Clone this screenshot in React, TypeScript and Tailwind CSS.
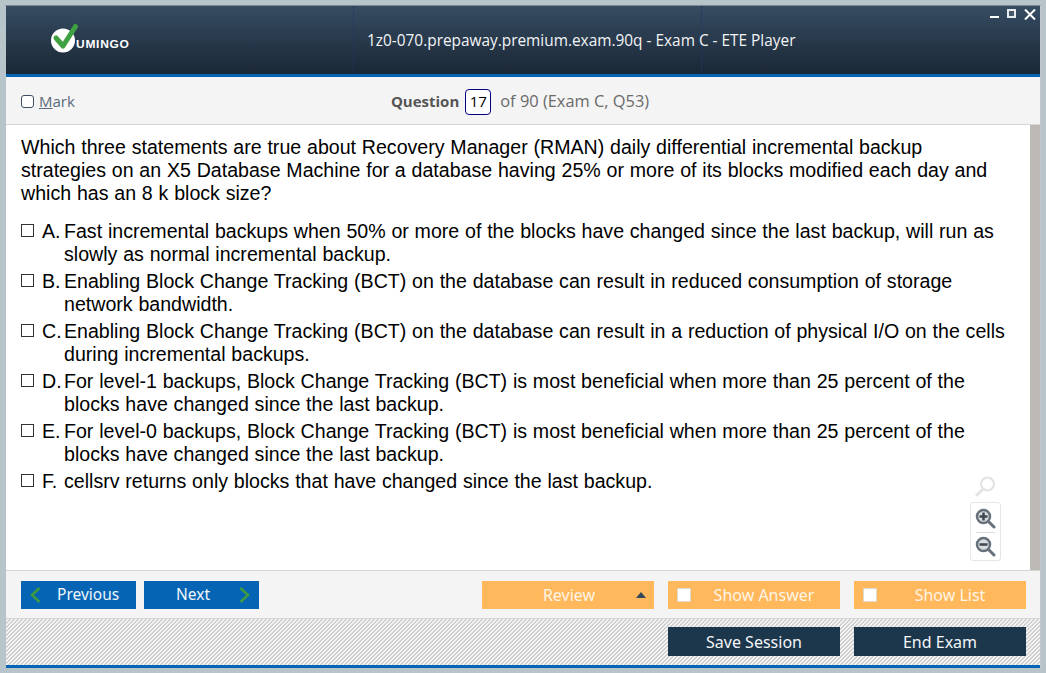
import { ReactNode } from 'react';

const options = [
  {
    label: 'A.',
    text: 'Fast incremental backups when 50% or more of the blocks have changed since the last backup, will run as slowly as normal incremental backup.',
  },
  {
    label: 'B.',
    text: 'Enabling Block Change Tracking (BCT) on the database can result in reduced consumption of storage network bandwidth.',
  },
  {
    label: 'C.',
    text: 'Enabling Block Change Tracking (BCT) on the database can result in a reduction of physical I/O on the cells during incremental backups.',
  },
  {
    label: 'D.',
    text: 'For level-1 backups, Block Change Tracking (BCT) is most beneficial when more than 25 percent of the blocks have changed since the last backup.',
  },
  {
    label: 'E.',
    text: 'For level-0 backups, Block Change Tracking (BCT) is most beneficial when more than 25 percent of the blocks have changed since the last backup.',
  },
  {
    label: 'F.',
    text: 'cellsrv returns only blocks that have changed since the last backup.',
  },
];

function Logo() {
  return (
    <div className="flex items-end">
      <svg width="32" height="30" viewBox="0 0 32 30" className="shrink-0">
        <circle cx="13" cy="17.500" r="12" fill="#ffffff" />
        <path d="M6 15 L13 23 L25.500 3.500" fill="none" stroke="#3fa142" strokeWidth="5" strokeLinecap="round" strokeLinejoin="round" />
      </svg>
      <span className="-ml-[6px] mb-[3px] origin-left font-['Liberation_Sans',sans-serif] text-[10px] leading-[11px] font-bold tracking-[0.6px] text-white [transform:scaleX(1.2)]">
        UMINGO
      </span>
    </div>
  );
}

function WindowControls() {
  return (
    <div className="flex h-[16px] items-start gap-[8px] pt-[3px] pr-[4px]">
      <div className="mt-[7px] h-[2px] w-[9px] bg-white" />
      <div className="h-[9px] w-[9px] border-2 border-[#e8ecef] bg-[#47586a]" />
      <svg width="12" height="11" viewBox="0 0 12 11">
        <path d="M1 0.500 L11 10.500 M11 0.500 L1 10.500" stroke="#ffffff" strokeWidth="2" />
      </svg>
    </div>
  );
}

function Header() {
  return (
    <header className="flex h-[68px] bg-gradient-to-b from-[#364d62] to-[#1a2736] font-['Open_Sans',sans-serif] text-white">
      <div className="flex w-[348px] shrink-0 items-start border-r border-dotted border-[#24346a] pt-[17px] pl-[44px]">
        <Logo />
      </div>
      <div className="flex w-[348px] shrink-0 items-center border-r border-dotted border-[#24346a] pt-[2px] pl-[13px] whitespace-nowrap">
        <span className="text-[15.400px] text-[#f2f4f6]">1z0-070.prepaway.premium.exam.90q - Exam C - ETE Player</span>
      </div>
      <div className="flex flex-1 justify-end">
        <WindowControls />
      </div>
    </header>
  );
}

function MarkBar() {
  return (
    <div className="grid h-[48px] grid-cols-[1fr_auto_1fr] items-center border-b border-[#d6d6d6] bg-[#f4f4f4] pt-[2px] pr-[8px] pl-[15px] font-['Open_Sans',sans-serif]">
      <div className="flex items-center gap-[5px] text-[15px] text-[#5a6b7d]">
        <div className="h-[13px] w-[13px] rounded-[3px] border border-[#3c4f63] bg-white" />
        <span>
          <span className="underline">M</span>ark
        </span>
      </div>
      <div className="mr-[13px] flex items-center text-[16.400px] text-[#6a6a6a]">
        <span className="text-[15px] font-bold text-[#555555]">Question</span>
        <span className="mr-[9px] ml-[6px] flex h-[26px] w-[26px] items-center justify-center rounded-[4px] border border-[#000080] bg-white text-[15px] text-black">
          17
        </span>
        <span>of 90 (Exam C, Q53)</span>
      </div>
      <div />
    </div>
  );
}

function Magnifier({ sign, light }: { sign?: 'plus' | 'minus'; light?: boolean }) {
  const color = light ? '#e3e3e3' : '#66717c';
  return (
    <svg width="21" height="21" viewBox="0 0 21 21" fill="none">
      {light ? (
        <>
          <circle cx="12.500" cy="8" r="6.500" stroke={color} strokeWidth="2.200" />
          <path d="M8 13 L2 19" stroke={color} strokeWidth="3" strokeLinecap="round" />
        </>
      ) : (
        <>
          <circle cx="8.500" cy="8.500" r="6.500" stroke={color} strokeWidth="2.500" fill="#d9dde0" />
          <path d="M13.500 13.500 L19 19" stroke={color} strokeWidth="3" strokeLinecap="round" />
          <path d="M4.500 8.500 H12.500" stroke="#3e4650" strokeWidth="2.500" />
          {sign === 'plus' && <path d="M8.500 4.500 V12.500" stroke="#3e4650" strokeWidth="2.500" />}
        </>
      )}
    </svg>
  );
}

function ZoomControls() {
  return (
    <div className="absolute right-[29px] bottom-[9px] flex flex-col items-center">
      <Magnifier light />
      <div className="mt-[5px] flex h-[59px] w-[31px] flex-col items-center rounded-[3px] border border-[#e6e6e6] bg-white pt-[5px]">
        <Magnifier sign="plus" />
        <div className="my-[3px] h-px w-[19px] bg-[#dddddd]" />
        <Magnifier sign="minus" />
      </div>
    </div>
  );
}

function Content() {
  return (
    <div className="flex h-[445px]">
      <main className="relative flex-1 bg-white pt-[11px] pr-[24px] pl-[15px] font-['Liberation_Sans',sans-serif] text-[19.600px] leading-[23px] [word-spacing:0.35px] text-black">
        <p>
          Which three statements are true about Recovery Manager (RMAN) daily differential incremental backup strategies on an X5 Database Machine for a database having 25% or more of its blocks modified each day and which has an 8 k block size?
        </p>
        <div className="mt-[15px] flex flex-col gap-[4px]">
          {options.map((option) => (
            <div key={option.label} className="flex">
              <div className="mt-[4px] mr-[8px] h-[13px] w-[13px] shrink-0 border border-[#333333] bg-white" />
              <span className="w-[22px] shrink-0">{option.label}</span>
              <span>{option.text}</span>
            </div>
          ))}
        </div>
        <ZoomControls />
      </main>
      <div className="w-[10px] bg-[#bdb9b5]" />
    </div>
  );
}

function NavButton({ children, dir }: { children: ReactNode; dir: 'left' | 'right' }) {
  const arrow = (
    <svg width="11" height="16" viewBox="0 0 11 16" fill="none" className="shrink-0">
      <path d={dir === 'left' ? 'M9.500 1 L2 8 L9.500 15' : 'M1.500 1 L9 8 L1.500 15'} stroke="#3f9b3f" strokeWidth="2.500" />
    </svg>
  );
  return (
    <button type="button" className="flex h-[28px] w-[115px] items-center bg-[#0565b4] px-[9px] text-[15.500px] text-[#f1f6fb]">
      {dir === 'left' && arrow}
      <span className={dir === 'left' ? 'mt-[1px] ml-[16px]' : 'mt-[1px] ml-[23px]'}>{children}</span>
      {dir === 'right' && <span className="ml-auto">{arrow}</span>}
    </button>
  );
}

function OrangeButton({ children, check }: { children: ReactNode; check?: boolean }) {
  return (
    <button type="button" className="flex h-[28px] w-[172px] items-center bg-[#ffb85c] pr-[8px] pl-[9px] text-[16px] text-[#fff5e6]">
      {check ? (
        <div className="h-[14px] w-[14px] shrink-0 border border-[#e0d8cc] bg-white" />
      ) : (
        <div className="h-[14px] w-[14px] shrink-0" />
      )}
      <span className={check ? 'ml-[15px] flex-1 text-center' : '-ml-[3px] flex-1 text-center'}>{children}</span>
      {!check && (
        <svg width="10" height="6" viewBox="0 0 10 6" className="shrink-0">
          <path d="M5 0 L10 6 H0 Z" fill="#33475b" />
        </svg>
      )}
      {check && <span className="w-[10px] shrink-0" />}
    </button>
  );
}

function Footer() {
  return (
    <footer className="font-['Noto_Sans',sans-serif]">
      <div className="flex h-[49px] items-center justify-between border-t border-b border-[#d6d6d6] bg-[#f4f4f4] pr-[14px] pl-[15px]">
        <div className="flex gap-[8px]">
          <NavButton dir="left">Previous</NavButton>
          <NavButton dir="right">Next</NavButton>
        </div>
        <div className="flex gap-[14px]">
          <OrangeButton>Review</OrangeButton>
          <OrangeButton check>Show Answer</OrangeButton>
          <OrangeButton check>Show List</OrangeButton>
        </div>
      </div>
      <div className="flex h-[46px] items-start justify-end gap-[14px] bg-[#f1f1f1] bg-[repeating-linear-gradient(135deg,#d0d0d0_0px,#d0d0d0_1px,#f4f4f4_1px,#f4f4f4_2.828px)] pt-[8px] pr-[14px]">
        <button type="button" className="h-[29px] w-[172px] bg-[#1c364c] text-[16px] text-[#f4f7fa]">
          Save Session
        </button>
        <button type="button" className="h-[29px] w-[172px] bg-[#1c364c] text-[16px] text-[#f4f7fa]">
          End Exam
        </button>
      </div>
      <div className="h-[3px] bg-[#0565b4]" />
    </footer>
  );
}

export default function App() {
  return (
    <div className="h-[673px] w-[1046px] overflow-hidden bg-[#b7c4ca] pt-[5px] pr-[5px] pl-[5px]">
      <div className="border-t border-r border-l border-t-[#7d878f] border-r-[#c4c8ca] border-l-[#b7c4ca] bg-white">
        <Header />
        <div className="h-[3px] bg-[#0565b4]" />
        <MarkBar />
        <Content />
        <Footer />
      </div>
    </div>
  );
}
